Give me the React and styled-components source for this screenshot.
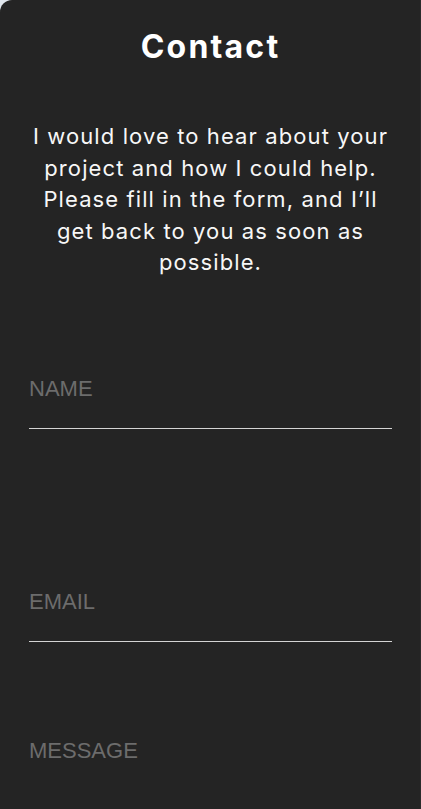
import React from "react";
import styled, { createGlobalStyle } from "styled-components";

const Global = createGlobalStyle`
  html, body { margin: 0; padding: 0; background: #dfe5ec; }
  * { box-sizing: border-box; }
`;

const Panel = styled.section`
  min-height: 809px;
  background: #242424;
  border-top-left-radius: 12px;
  border-right: 1px solid #2b2b2b;
  padding: 27px 28px 0 29px;
  font-family: Inter, "Noto Sans", sans-serif;
  color: #fff;
`;

const Title = styled.h1`
  margin: 0;
  font-size: 32px;
  line-height: 40px;
  font-weight: 700;
  text-align: center;
  letter-spacing: 2.2px;
`;

const Intro = styled.p`
  margin: 54px 0 0;
  font-size: 22px;
  line-height: 31.5px;
  font-weight: 400;
  letter-spacing: 1.1px;
  text-align: center;
  color: #f7f7f7;
`;

const Form = styled.form`
  display: flex;
  flex-direction: column;
  margin-top: 89px;
`;

const Field = styled.div`
  margin-bottom: ${(p) => p.$gap}px;
`;

const Input = styled.input`
  display: block;
  width: 100%;
  padding: 8px 0 26px;
  line-height: 26px;
  font-size: 22px;
  font-family: "Liberation Sans", Arial, sans-serif;
  color: #fff;
  background: transparent;
  border: none;
  border-bottom: 1px solid #d4d4d4;
  border-radius: 0;
  outline: none;
  &::placeholder { color: #6c6c6c; opacity: 1; }
`;

const TextArea = styled.textarea`
  display: block;
  width: 100%;
  height: 78px;
  padding: 8px 0 0;
  line-height: 26px;
  font-size: 22px;
  font-family: "Liberation Sans", Arial, sans-serif;
  color: #fff;
  background: transparent;
  border: none;
  outline: none;
  resize: none;
  overflow: hidden;
  &::placeholder { color: #6c6c6c; opacity: 1; }
`;

export default function App() {
  return (
    <>
      <Global />
      <Panel>
        <Title>Contact</Title>
        <Intro>
          I would love to hear about your project and how I could help. Please fill in the form, and I’ll get back to you as soon as possible.
        </Intro>
        <Form onSubmit={(e) => e.preventDefault()}>
          <Field $gap={152}>
            <Input type="text" placeholder="NAME" />
          </Field>
          <Field $gap={88}>
            <Input type="email" placeholder="EMAIL" />
          </Field>
          <Field $gap={0}>
            <TextArea placeholder="MESSAGE" />
          </Field>
        </Form>
      </Panel>
    </>
  );
}
